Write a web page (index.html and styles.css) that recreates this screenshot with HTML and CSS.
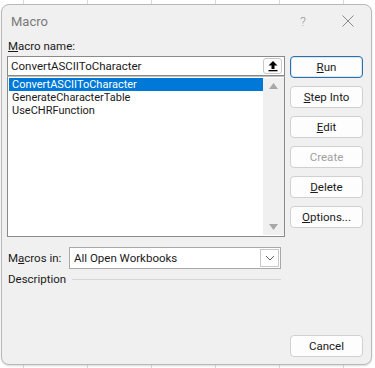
FILE: index.html
```html
<!DOCTYPE html>
<html lang="en">
<head>
<meta charset="utf-8">
<title>Macro</title>
<link rel="stylesheet" href="styles.css">
</head>
<body>
<div class="dialog">
  <div class="titlebar">
    <span class="title">Macro</span>
    <span class="help">?</span>
    <span class="close">
      <svg width="12" height="12" viewBox="0 0 12 12"><path d="M0.5 0.5 L11.5 11.5 M11.5 0.5 L0.5 11.5" stroke="#8a8a8a" stroke-width="1" fill="none"/></svg>
    </span>
  </div>
  <div class="body">
    <div class="left">
      <div class="label"><u>M</u>acro name:</div>
      <div class="namebox">
        <span class="nametext">ConvertASCIIToCharacter</span>
        <span class="upbtn">
          <svg width="12" height="12" viewBox="0 0 12 12"><path d="M6 1 L10.5 5.5 L7.5 5.5 L7.5 9 L4.5 9 L4.5 5.5 L1.5 5.5 Z" fill="#000"/><rect x="1.5" y="10" width="9" height="1.3" fill="#000"/></svg>
        </span>
      </div>
      <div class="listbox">
        <ul class="items">
          <li class="item selected">ConvertASCIIToCharacter</li>
          <li class="item">GenerateCharacterTable</li>
          <li class="item">UseCHRFunction</li>
        </ul>
        <div class="scrollbar">
          <svg width="9" height="6" viewBox="0 0 9 6"><path d="M4.5 0 L9 6 L0 6 Z" fill="#a8a8a8"/></svg>
          <svg width="9" height="6" viewBox="0 0 9 6"><path d="M0 0 L9 0 L4.5 6 Z" fill="#a8a8a8"/></svg>
        </div>
      </div>
      <div class="inrow">
        <span class="inlabel">M<u>a</u>cros in:</span>
        <div class="combo">
          <span class="combotext">All Open Workbooks</span>
          <span class="chev">
            <svg width="10" height="6" viewBox="0 0 10 6"><path d="M1 1 L5 5 L9 1" stroke="#606060" stroke-width="1" fill="none"/></svg>
          </span>
        </div>
      </div>
      <div class="descrow">
        <span class="desclabel">Description</span>
        <span class="rule"></span>
      </div>
    </div>
    <div class="right">
      <button class="btn default"><u>R</u>un</button>
      <button class="btn"><u>S</u>tep Into</button>
      <button class="btn"><u>E</u>dit</button>
      <button class="btn disabled">Create</button>
      <button class="btn"><u>D</u>elete</button>
      <button class="btn"><u>O</u>ptions...</button>
    </div>
  </div>
  <div class="footer">
    <button class="btn">Cancel</button>
  </div>
</div>
</body>
</html>
```
FILE: styles.css
```css
* { box-sizing: border-box; }
html, body { margin: 0; padding: 0; }
body {
  width: 375px;
  height: 368px;
  overflow: hidden;
  background-color: #ffffff;
  background-image: repeating-linear-gradient(90deg, transparent 0 23px, #d9d9d9 23px 24px, transparent 24px 64px);
  font-family: Roboto, "Noto Sans", sans-serif;
  font-size: 11.5px;
  color: #1a1a1a;
  padding: 4px 0 0 1px;
}
.dialog {
  width: 371px;
  height: 361px;
  background: #f0f0f0;
  border: 1px solid #b9b9b9;
  border-radius: 8px;
  display: flex;
  flex-direction: column;
  box-shadow: 0 1px 2px rgba(0,0,0,0.15);
}
.titlebar {
  height: 34px;
  display: flex;
  align-items: center;
  padding: 0 0 2px 9px;
}
.title {
  color: #7a7a7a;
  font-size: 13px;
  flex: 1;
}
.help {
  color: #9a9a9a;
  font-size: 13px;
  font-weight: 300;
  width: 42px;
}
.close {
  width: 24px;
  display: flex;
  align-items: center;
  margin-right: 5px;
}
.body {
  display: flex;
  padding: 0 8px 0 5px;
  gap: 5px;
}
.left {
  width: 278px;
  display: flex;
  flex-direction: column;
}
.label {
  height: 17px;
  line-height: 14px;
  padding-left: 1px;
}
.namebox {
  height: 20px;
  background: #fff;
  border: 1px solid #8a8a8a;
  display: flex;
  align-items: center;
  padding-left: 3px;
}
.nametext { flex: 1; }
.upbtn {
  width: 19px;
  height: 16px;
  margin-right: 2px;
  border: 1px solid #c8c8c8;
  border-radius: 3px;
  background: #fdfdfd;
  display: flex;
  align-items: center;
  justify-content: center;
}
.listbox {
  height: 161px;
  background: #fff;
  border: 1px solid #8a8a8a;
  border-top: 1px solid #c0c0c0;
  display: flex;
  padding: 1px 0 1px 1px;
}
.items {
  list-style: none;
  margin: 0;
  padding: 0;
  flex: 1;
}
.item {
  height: 13px;
  line-height: 13px;
  font-size: 11px;
  padding-left: 3px;
  white-space: nowrap;
}
.item.selected {
  background: #0078d7;
  color: #fff;
}
.scrollbar {
  width: 21px;
  background: #f0f0f0;
  display: flex;
  flex-direction: column;
  justify-content: space-between;
  align-items: center;
  padding: 5px 0 5px;
}
.inrow {
  display: flex;
  align-items: center;
  margin-top: 10px;
  height: 22px;
}
.inlabel {
  width: 62px;
  padding-left: 1px;
}
.combo {
  width: 212px;
  height: 22px;
  background: #fff;
  border: 1px solid #a8a8a8;
  display: flex;
  align-items: center;
  padding-left: 4px;
}
.combotext { flex: 1; }
.chev {
  width: 19px;
  height: 18px;
  border: 1px solid #c8c8c8;
  margin-right: 1px;
  display: flex;
  align-items: center;
  justify-content: center;
}
.descrow {
  display: flex;
  align-items: center;
  height: 18px;
  margin-top: 1px;
}
.desclabel { padding-left: 1px; }
.rule {
  flex: 1;
  height: 1px;
  background: #d6d6d6;
  margin-left: 6px;
  margin-right: 4px;
}
.right {
  width: 73px;
  display: flex;
  flex-direction: column;
  gap: 8px;
  padding-top: 17px;
}
.btn {
  width: 73px;
  height: 22px;
  background: #fdfdfd;
  border: 1px solid #d0d0d0;
  border-radius: 4px;
  font-family: inherit;
  font-size: 11.5px;
  color: #1a1a1a;
  padding: 0;
  line-height: 18px;
}
.btn.default {
  border: 1px solid #2a6fa8;
  box-shadow: inset 0 0 0 1px #d9e7f3;
}
.btn.disabled { color: #a0a0a0; }
.footer {
  margin-top: auto;
  display: flex;
  justify-content: flex-end;
  padding: 0 8px 7px 0;
}
```
